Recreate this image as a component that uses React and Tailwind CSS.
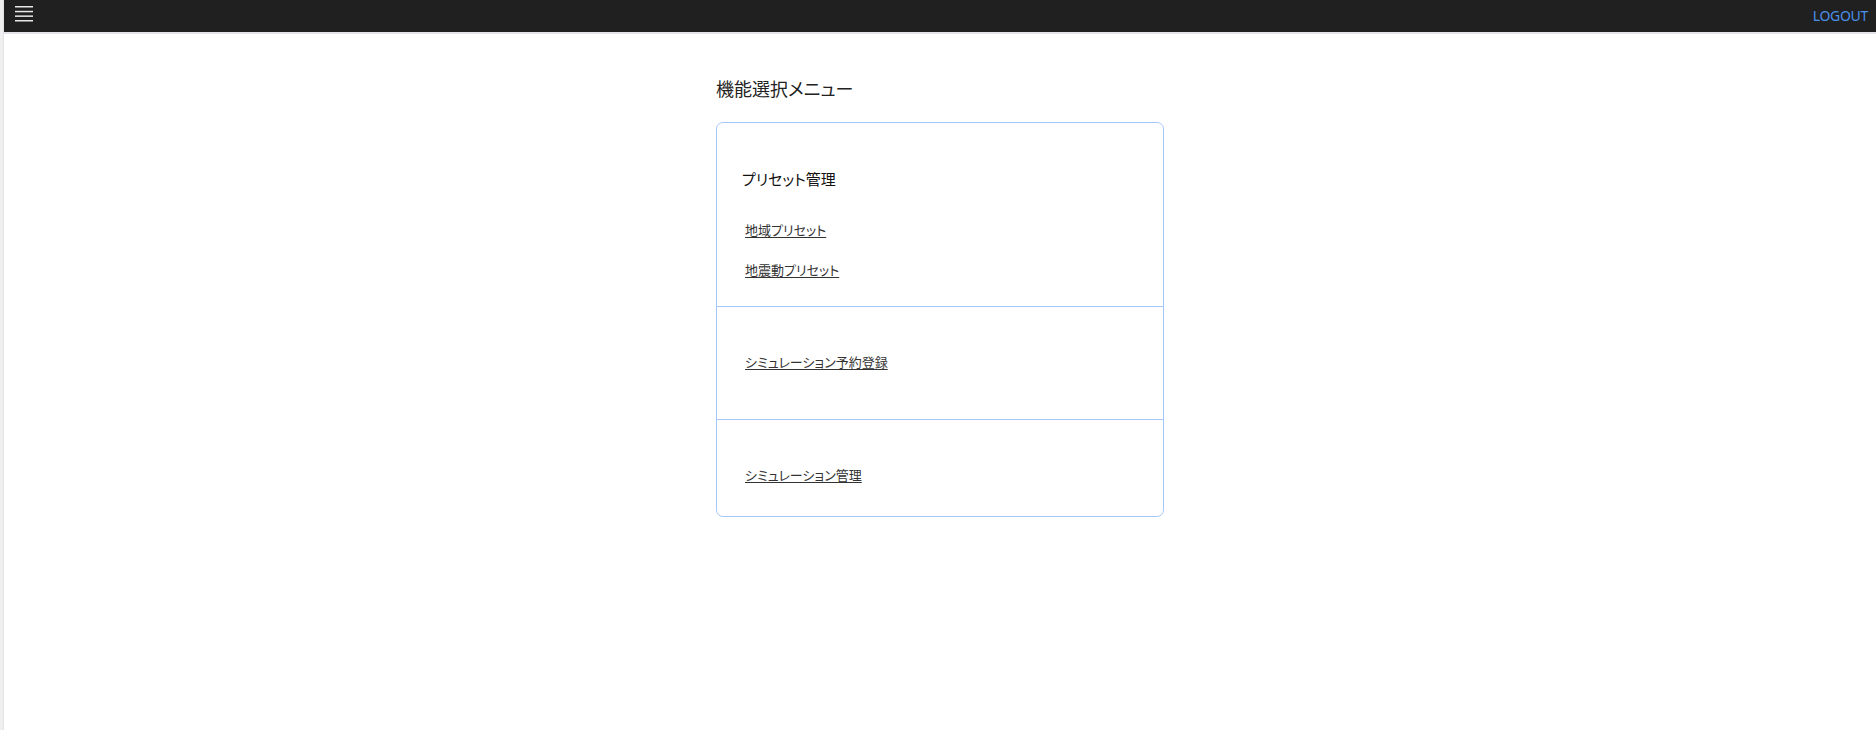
import React from "react";

const jp = "font-['Noto_Sans_CJK_JP','Noto_Sans',sans-serif] [font-feature-settings:'palt']";

function Hamburger() {
  return (
    <svg width="18" height="18" viewBox="0 0 18 18" className="block">
      <rect x="0" y="1" width="18" height="1.5" fill="#e8e8e8" />
      <rect x="0" y="5.8" width="18" height="1.5" fill="#e8e8e8" />
      <rect x="0" y="10.4" width="18" height="1.5" fill="#e8e8e8" />
      <rect x="0" y="15" width="18" height="1.5" fill="#e8e8e8" />
    </svg>
  );
}

export default function App() {
  return (
    <div className={`flex h-screen w-full bg-white ${jp}`}>
      <div className="w-[4px] shrink-0 bg-[#efefef] border-r border-[#e2e2e2]" />
      <div className="flex min-w-0 flex-1 flex-col">
        <header className="flex h-[34px] shrink-0 items-center justify-between border-b-2 border-[#e4e4ea] bg-[#202020] pl-[11px] pr-[8px]">
          <div className="-mt-[5px]">
            <Hamburger />
          </div>
          <span className="font-['Noto_Sans',sans-serif] text-[14px] tracking-[-0.3px] text-[#4a90e8] -mt-[2px]">
            LOGOUT
          </span>
        </header>
        <main className="flex flex-1 justify-center">
          <div className="w-[448px] pt-[42px]">
            <h1 className="text-[18px] font-normal leading-[24px] text-[#222] mb-[22px]">
              機能選択メニュー
            </h1>
            <div className="rounded-[7px] border border-[#a7c7fa]">
              <section className="pl-[25px] pt-[45px] pb-[16px]">
                <div className="text-[15px] leading-[22px] text-[#111] mb-[20px]">
                  プリセット管理
                </div>
                <div className="pl-[3px]">
                  <a href="#" className="block py-[10px] text-[13px] leading-[20px] text-[#333] underline underline-offset-2">
                    地域プリセット
                  </a>
                  <a href="#" className="block py-[10px] text-[13px] leading-[20px] text-[#333] underline underline-offset-2">
                    地震動プリセット
                  </a>
                </div>
              </section>
              <section className="border-t border-[#a7c7fa] pl-[28px] pt-[45px] pb-[47px]">
                <a href="#" className="block text-[13px] leading-[20px] text-[#333] underline underline-offset-2">
                  シミュレーション予約登録
                </a>
              </section>
              <section className="border-t border-[#a7c7fa] pl-[28px] pt-[45px] pb-[31px]">
                <a href="#" className="block text-[13px] leading-[20px] text-[#333] underline underline-offset-2">
                  シミュレーション管理
                </a>
              </section>
            </div>
          </div>
        </main>
      </div>
    </div>
  );
}
